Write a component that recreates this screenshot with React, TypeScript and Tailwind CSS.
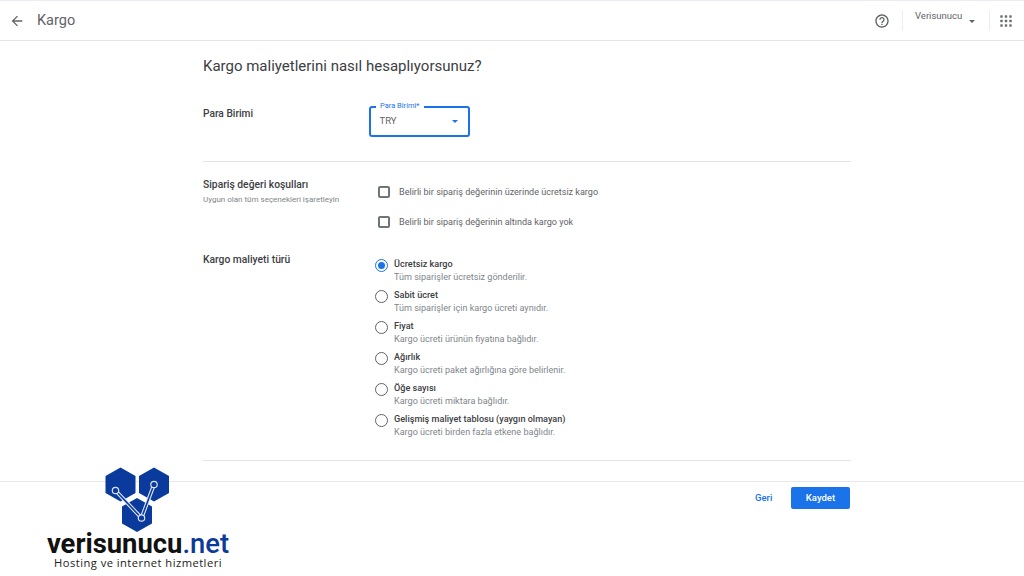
import React from "react";

const options = [
  ["Ücretsiz kargo", "Tüm siparişler ücretsiz gönderilir."],
  ["Sabit ücret", "Tüm siparişler için kargo ücreti aynıdır."],
  ["Fiyat", "Kargo ücreti ürünün fiyatına bağlıdır."],
  ["Ağırlık", "Kargo ücreti paket ağırlığına göre belirlenir."],
  ["Öğe sayısı", "Kargo ücreti miktara bağlıdır."],
  ["Gelişmiş maliyet tablosu (yaygın olmayan)", "Kargo ücreti birden fazla etkene bağlıdır."],
];

function Logo() {
  const hex = (cx: number, cy: number) =>
    `${cx},${cy - 17} ${cx + 15},${cy - 8.5} ${cx + 15},${cy + 8.5} ${cx},${cy + 17} ${cx - 15},${cy + 8.5} ${cx - 15},${cy - 8.5}`;
  const line = "115.5,490.5 141.5,518 154,484.5";
  return (
    <div className="absolute left-0 top-[466px] w-[276px] flex flex-col items-center">
      <svg width="70" height="68" viewBox="103 466 70 68" className="block">
        <polygon points={hex(120.5, 484.5)} fill="#0a3a9c" />
        <polygon points={hex(154, 484.5)} fill="#0a3a9c" />
        <polygon points={hex(137, 515)} fill="#0a3a9c" />
        <polyline points={line} fill="none" stroke="#dfe6f5" strokeWidth="3.8" strokeLinejoin="round" />
        <polyline points={line} fill="none" stroke="#0a3a9c" strokeWidth="1.6" strokeLinejoin="round" />
        <circle cx="115.5" cy="490.5" r="3.2" fill="#0a3a9c" stroke="#dfe6f5" strokeWidth="1.2" />
        <circle cx="141.5" cy="518" r="3.2" fill="#0a3a9c" stroke="#dfe6f5" strokeWidth="1.2" />
        <circle cx="154" cy="484.5" r="3.2" fill="#0a3a9c" stroke="#dfe6f5" strokeWidth="1.2" />
      </svg>
      <div className="font-['Roboto',sans-serif] font-bold text-[27.4px] leading-[22px] text-[#111111] mt-[-1px] whitespace-nowrap">
        verisunucu<span className="text-[#0a3a9c] font-medium">.net</span>
      </div>
      <div className="font-['Open_Sans',sans-serif] text-[11.2px] leading-[14px] text-[#222222] tracking-[0.45px] mt-[1px] whitespace-nowrap">
        Hosting ve internet hizmetleri
      </div>
    </div>
  );
}

export default function App() {
  return (
    <div className="relative w-[1024px] h-[576px] overflow-hidden bg-white font-['Roboto',sans-serif] flex flex-col">
      <header className="h-[41px] shrink-0 border-t border-t-[#efeaf6] border-b border-b-[#e4e5e7] flex items-center">
        <svg width="16" height="16" viewBox="0 0 24 24" className="ml-[9px] text-[#5f6368]" fill="currentColor">
          <path d="M20 11H7.83l5.59-5.59L12 4l-8 8 8 8 1.41-1.41L7.83 13H20v-2z" />
        </svg>
        <span className="ml-[12px] text-[14.5px] text-[#5f6368]">Kargo</span>
        <div className="ml-auto flex items-center">
          <svg width="16" height="16" viewBox="0 0 24 24" fill="#5f6368">
            <path d="M11 18h2v-2h-2v2zm1-16C6.48 2 2 6.48 2 12s4.48 10 10 10 10-4.48 10-10S17.52 2 12 2zm0 18c-4.41 0-8-3.59-8-8s3.59-8 8-8 8 3.59 8 8-3.59 8-8 8zm0-14c-2.21 0-4 1.79-4 4h2c0-1.1.9-2 2-2s2 .9 2 2c0 2-3 1.75-3 5h2c0-2.25 3-2.5 3-5 0-2.21-1.79-4-4-4z" />
          </svg>
          <div className="ml-[12px] w-px h-[20px] bg-[#eceded]" />
          <div className="ml-[12px] w-[74px] h-[20px] relative text-[9.5px] leading-[11px] text-[#5f6368]">
            <span className="block -mt-[1px]">Verisunucu</span>
            <span className="absolute left-[54px] top-[9px] border-x-[3px] border-x-transparent border-t-[3px] border-t-[#5f6368]" />
          </div>
          <div className="w-px h-[20px] bg-[#eceded]" />
          <svg width="12" height="12" viewBox="0 0 12 12" fill="#6b6f73" className="ml-[10px] mr-[12px]">
            {[1.5, 6, 10.5].flatMap((x) =>
              [1.5, 6, 10.5].map((y) => <rect key={`${x}-${y}`} x={x - 1.2} y={y - 1.2} width="2.4" height="2.4" rx="0.5" />)
            )}
          </svg>
        </div>
      </header>

      <main className="flex-1 ml-[203px] w-[648px] flex flex-col">
        <h1 className="mt-[15px] text-[15px] leading-[20px] text-[#3c4043]">Kargo maliyetlerini nasıl hesaplıyorsunuz?</h1>

        <div className="mt-[30px] h-[55px] grid grid-cols-[166px_1fr]">
          <div className="text-[10.2px] leading-[14px] font-medium text-[#3c4043] pt-[1px]">Para Birimi</div>
          <div className="relative w-[101px] h-[31px] border-2 border-[#1a73e8] rounded-[3px] flex items-center pl-[8.5px] text-[9.5px] text-[#5f6368]">
            <span className="absolute left-[5px] -top-[7.5px] bg-white px-[4px] text-[7.5px] leading-[9px] text-[#1a73e8] whitespace-nowrap">Para Birimi*</span>
            TRY
            <span className="absolute right-[10px] top-[12px] border-x-[3.5px] border-x-transparent border-t-[3.5px] border-t-[#1a73e8]" />
          </div>
        </div>

        <div className="h-px bg-[#e3e4e6]" />

        <div className="mt-[16px] grid grid-cols-[166px_1fr]">
          <div>
            <div className="text-[10.3px] leading-[14px] font-medium text-[#3c4043]">Sipariş değeri koşulları</div>
            <div className="mt-[2px] text-[8px] leading-[12px] text-[#80868b]">Uygun olan tüm seçenekleri işaretleyin</div>
          </div>
          <div className="flex flex-col gap-[18px] pl-[9px] pt-[8px]">
            {["Belirli bir sipariş değerinin üzerinde ücretsiz kargo", "Belirli bir sipariş değerinin altında kargo yok"].map((t) => (
              <div key={t} className="flex items-center h-[12px]">
                <span className="w-[12px] h-[12px] border-2 border-[#70757a] rounded-[2px]" />
                <span className="ml-[9px] mt-[1px] text-[9.05px] text-[#5f6368] whitespace-nowrap">{t}</span>
              </div>
            ))}
          </div>
        </div>

        <div className="mt-[25px] grid grid-cols-[166px_1fr]">
          <div className="text-[10.3px] leading-[14px] font-medium text-[#3c4043]">Kargo maliyeti türü</div>
          <div className="flex flex-col pl-[6px] pt-[6px]">
            {options.map(([title, desc], i) => (
              <div key={title} className="flex h-[31px]">
                <span className={`w-[13px] h-[13px] rounded-full border-[1.5px] flex items-center justify-center ${i === 0 ? "border-[#1a73e8]" : "border-[#5f6368]"}`}>
                  {i === 0 && <span className="w-[6.5px] h-[6.5px] rounded-full bg-[#1a73e8]" />}
                </span>
                <div className="ml-[6px] -mt-[1px]">
                  <div className="text-[9.1px] leading-[13px] font-medium text-[#3c4043] whitespace-nowrap">{title}</div>
                  <div className="text-[9.05px] leading-[13px] text-[#80868b] whitespace-nowrap">{desc}</div>
                </div>
              </div>
            ))}
          </div>
        </div>

        <div className="mt-[15px] h-px bg-[#e3e4e6]" />
      </main>

      <footer className="h-[95px] shrink-0 border-t border-t-[#e8e9eb]">
        <div className="ml-[755px] w-[95px] h-[22px] mt-[5px] flex items-center justify-between">
          <span className="text-[9.5px] font-medium text-[#1a73e8]">Geri</span>
          <span className="w-[59px] h-[22px] rounded-[2px] bg-[#1a73e8] text-white text-[9.5px] font-medium flex items-center justify-center">Kaydet</span>
        </div>
      </footer>

      <Logo />
    </div>
  );
}
